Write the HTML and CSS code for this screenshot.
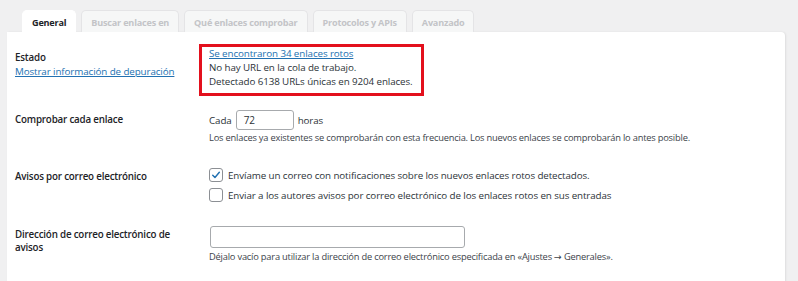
FILE: index.html
```html
<!DOCTYPE html>
<html lang="es">
<head>
<meta charset="utf-8">
<title>Ajustes</title>
<link rel="stylesheet" href="styles.css">
</head>
<body>
<nav class="tabs">
  <span class="tab active">General</span>
  <span class="tab">Buscar enlaces en</span>
  <span class="tab">Qué enlaces comprobar</span>
  <span class="tab">Protocolos y APIs</span>
  <span class="tab">Avanzado</span>
</nav>
<main class="panel">
  <div class="row row-status">
    <div class="label">
      <div class="label-text">Estado</div>
      <a class="link" href="#">Mostrar información de depuración</a>
    </div>
    <div class="field">
      <div class="status-box">
        <a class="link" href="#">Se encontraron 34 enlaces rotos</a>
        <div>No hay URL en la cola de trabajo.</div>
        <div>Detectado 6138 URLs únicas en 9204 enlaces.</div>
      </div>
    </div>
  </div>
  <div class="row row-check">
    <div class="label"><div class="label-text">Comprobar cada enlace</div></div>
    <div class="field">
      <div class="inline">Cada <span class="input small">72</span> horas</div>
      <div class="desc">Los enlaces ya existentes se comprobarán con esta frecuencia. Los nuevos enlaces se comprobarán lo antes posible.</div>
    </div>
  </div>
  <div class="row row-mail">
    <div class="label"><div class="label-text">Avisos por correo electrónico</div></div>
    <div class="field">
      <label class="cb-line"><span class="cb checked"><svg viewBox="0 0 14 14" width="14" height="14"><path d="M3.2 7.2 L5.8 9.8 L10.9 3.9" fill="none" stroke="#2271b1" stroke-width="1.7" stroke-linecap="round" stroke-linejoin="round"/></svg></span>Envíame un correo con notificaciones sobre los nuevos enlaces rotos detectados.</label>
      <label class="cb-line"><span class="cb"></span>Enviar a los autores avisos por correo electrónico de los enlaces rotos en sus entradas</label>
    </div>
  </div>
  <div class="row row-addr">
    <div class="label"><div class="label-text wrap">Dirección de correo electrónico de avisos</div></div>
    <div class="field">
      <span class="input wide"></span>
      <div class="desc">Déjalo vacío para utilizar la dirección de correo electrónico especificada en «Ajustes <span class="arrow">→</span> Generales».</div>
    </div>
  </div>
</main>
</body>
</html>
```
FILE: styles.css
```css
html, body {
  margin: 0;
  padding: 0;
  background: #f0f0f1;
  height: 100%;
}
body {
  font-family: "Open Sans", "Noto Sans", sans-serif;
  font-size: 9.8px;
  letter-spacing: -0.1px;
  color: #2c3338;
  overflow: hidden;
}
.tabs {
  display: flex;
  gap: 5px;
  padding: 10px 0 0 22px;
  height: 22px;
}
.tab {
  box-sizing: border-box;
  height: 22px;
  padding: 1px 9px 0;
  display: flex;
  align-items: center;
  font-weight: 700;
  font-size: 9.1px;
  letter-spacing: -0.2px;
  color: #c3c4c7;
  background: #f6f7f7;
  border: 1px solid #e4e4e6;
  border-bottom: none;
  border-radius: 5px 5px 0 0;
}
.tab.active {
  color: #1d2327;
  background: #fff;
  border-color: #fff;
}
.panel {
  margin-left: 7px;
  width: 778px;
  height: 260px;
  background: #fff;
  border-radius: 0 4px 0 0;
  box-shadow: 1px 0 2px rgba(0,0,0,0.08);
  padding: 12px 0 0 8px;
  box-sizing: border-box;
}
.row {
  display: grid;
  grid-template-columns: 194px 1fr;
}
.label-text {
  font-weight: 600;
  font-size: 9.8px;
  letter-spacing: -0.2px;
  color: #1d2327;
  line-height: 14px;
}
.label-text.wrap {
  width: 182px;
  line-height: 13px;
}
.link {
  color: #2271b1;
  text-decoration: underline;
  line-height: 14px;
  display: block;
}
.row-status .label { padding-top: 7px; }
.status-box {
  display: inline-block;
  border: 3px solid #e3101d;
  padding: 0 8px 4px 7px;
  line-height: 14px;
  margin-left: -10px;
}
.row-check { margin-top: 14px; }
.row-check .label { padding-top: 3px; }
.inline {
  display: flex;
  align-items: center;
  gap: 4px;
  height: 20px;
}
.input {
  box-sizing: border-box;
  display: inline-flex;
  align-items: center;
  border: 1px solid #a7aaad;
  border-radius: 3px;
  background: #fff;
  padding: 0 7px;
  color: #2c3338;
  font-size: 10px;
}
.input.small { width: 58px; height: 20px; }
.input.wide { width: 255px; height: 22px; display: flex; margin-left: 1px; }
.desc {
  font-size: 9.3px;
  letter-spacing: -0.2px;
  line-height: 14px;
  margin-top: 1px;
  color: #3c434a;
}
.arrow {
  font-family: "Noto Sans", "DejaVu Sans", sans-serif;
}
.row-mail { margin-top: 22px; }
.row-mail .label { padding-top: 3px; }
.cb-line {
  display: flex;
  align-items: center;
  gap: 5px;
  height: 16px;
}
.cb-line + .cb-line { margin-top: 4px; }
.cb {
  box-sizing: border-box;
  width: 14px;
  height: 14px;
  border: 1px solid #8c8f94;
  border-radius: 3px;
  display: inline-flex;
  align-items: center;
  justify-content: center;
  background: #fff;
}
.cb svg { display: block; }
.row-addr { margin-top: 23px; }
.row-addr .label { padding-top: 2px; }
.row-addr .desc { margin-top: 2px; }
```
